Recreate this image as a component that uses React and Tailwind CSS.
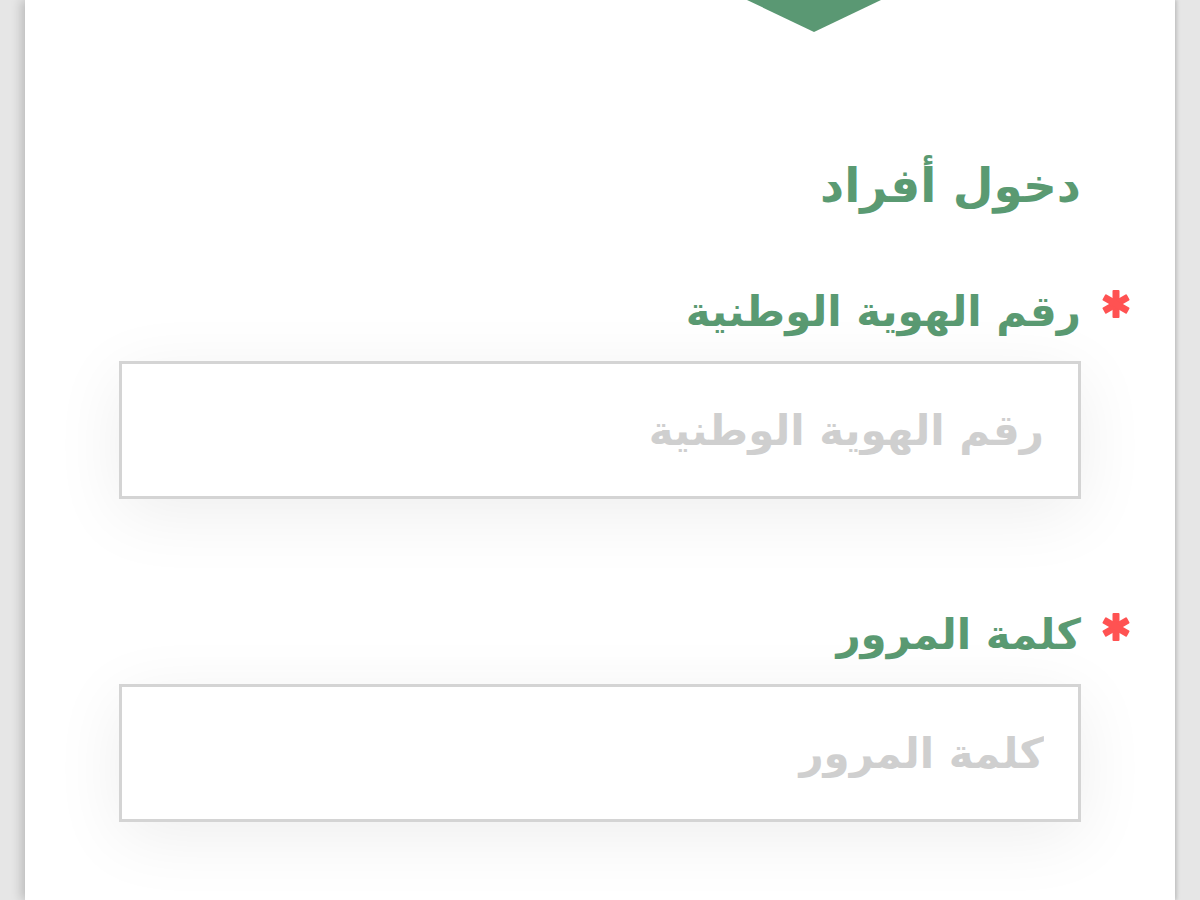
import React from "react";

function Asterisk() {
  return (
    <svg width="30" height="30" viewBox="0 0 30 30" className="shrink-0 mb-[16px]">
      <g fill="#ff5252" transform="translate(15 15)">
        <rect x="-3.5" y="-14" width="7" height="28" rx="1" />
        <rect x="-3.5" y="-14" width="7" height="28" rx="1" transform="rotate(60)" />
        <rect x="-3.5" y="-14" width="7" height="28" rx="1" transform="rotate(-60)" />
      </g>
    </svg>
  );
}

function Field({ label, placeholder, type = "text" }) {
  return (
    <div className="flex flex-col">
      <div className="flex items-center justify-start gap-[20px] -mr-[50px] h-[50px]">
        <Asterisk />
        <span className="text-[42px] font-bold leading-none text-[#5a9a72]">{label}</span>
      </div>
      <div className="mt-[24px] h-[138px] border-[3px] border-[#d4d4d4] bg-white shadow-[0_15px_70px_rgba(0,0,0,0.07)] flex items-center px-[34px]">
        <input
          type={type}
          placeholder={placeholder}
          className="w-full bg-transparent outline-none text-[42px] font-bold text-[#555] placeholder:text-[#cfcfcf]"
          style={{ fontFamily: "'DejaVu Sans', sans-serif" }}
        />
      </div>
    </div>
  );
}

export default function App() {
  return (
    <div
      dir="rtl"
      className="h-[900px] w-[1200px] overflow-hidden bg-[#e6e6e6] flex px-[25px]"
      style={{ fontFamily: "'DejaVu Sans', sans-serif" }}
    >
      <div className="relative flex-1 bg-white shadow-[-4px_0_10px_rgba(0,0,0,0.18),2px_0_3px_rgba(0,0,0,0.12)] px-[94px] pt-[145px]">
        <svg
          className="absolute top-0 left-[722px]"
          width="134"
          height="33"
          viewBox="0 0 134 33"
        >
          <polygon points="0,0 134,0 67,32" fill="#5a9873" />
        </svg>
        <h1 className="text-[47px] font-bold leading-none text-[#5a9a72] h-[80px] flex items-center">دخول أفراد</h1>
        <div className="mt-[62px]">
          <Field label="رقم الهوية الوطنية" placeholder="رقم الهوية الوطنية" />
        </div>
        <div className="mt-[111px]">
          <Field label="كلمة المرور" placeholder="كلمة المرور" type="password" />
        </div>
      </div>
    </div>
  );
}
